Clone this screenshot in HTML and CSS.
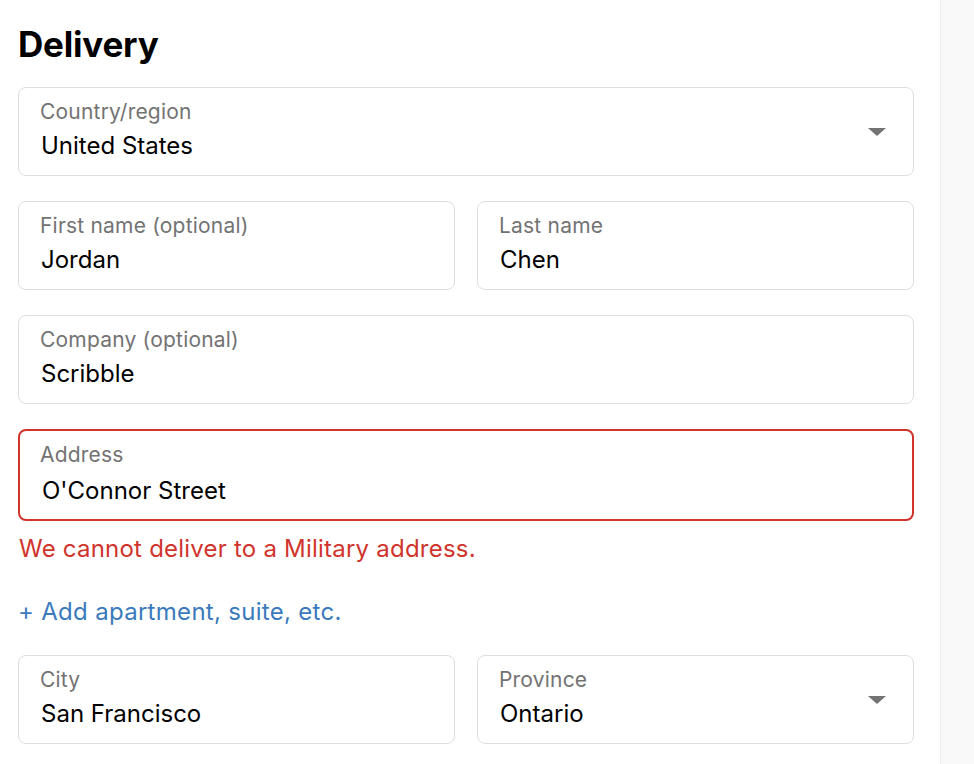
FILE: index.html
```html
<!DOCTYPE html>
<html lang="en">
<head>
<meta charset="utf-8">
<title>Delivery</title>
<link rel="stylesheet" href="styles.css">
</head>
<body>
<div class="page">
  <main class="main">
    <h1 class="title">Delivery</h1>
    <div class="form">
      <div class="field select">
        <div class="field-text">
          <span class="label">Country/region</span>
          <span class="value">United States</span>
        </div>
        <span class="caret"></span>
      </div>
      <div class="row">
        <div class="field">
          <div class="field-text">
            <span class="label">First name (optional)</span>
            <span class="value">Jordan</span>
          </div>
        </div>
        <div class="field">
          <div class="field-text">
            <span class="label">Last name</span>
            <span class="value">Chen</span>
          </div>
        </div>
      </div>
      <div class="field">
        <div class="field-text">
          <span class="label">Company (optional)</span>
          <span class="value">Scribble</span>
        </div>
      </div>
      <div class="group">
        <div class="field error">
          <div class="field-text">
            <span class="label">Address</span>
            <span class="value">O'Connor Street</span>
          </div>
        </div>
        <p class="error-msg">We cannot deliver to a Military address.</p>
      </div>
      <a class="add-link" href="#">+ Add apartment, suite, etc.</a>
      <div class="row">
        <div class="field">
          <div class="field-text">
            <span class="label">City</span>
            <span class="value">San Francisco</span>
          </div>
        </div>
        <div class="field select">
          <div class="field-text">
            <span class="label">Province</span>
            <span class="value">Ontario</span>
          </div>
          <span class="caret"></span>
        </div>
      </div>
    </div>
  </main>
  <aside class="sidebar"></aside>
</div>
</body>
</html>
```
FILE: styles.css
```css
* { box-sizing: border-box; }
html, body { margin: 0; padding: 0; background: #fff; }
body {
  font-family: Inter, "Liberation Sans", Arial, sans-serif;
  color: #000;
}
.page {
  display: flex;
  min-height: 764px;
}
.main {
  width: 940px;
  padding: 22px 26px 0 18px;
}
.sidebar {
  flex: 1;
  background: #f9f9f9;
  border-left: 1px solid #ececec;
}
.title {
  margin: 0;
  font-size: 35px;
  line-height: 44px;
  font-weight: 700;
  letter-spacing: -0.2px;
}
.form {
  margin-top: 21px;
  display: flex;
  flex-direction: column;
  gap: 25px;
}
.row {
  display: flex;
  gap: 22px;
}
.row .field { flex: 1; }
.field {
  height: 89px;
  border: 1px solid #dedede;
  border-radius: 8px;
  padding: 12px 21px 0 21px;
  display: flex;
  align-items: center;
  justify-content: space-between;
}
.field-text {
  display: flex;
  flex-direction: column;
  align-self: flex-start;
}
.label {
  font-size: 21px;
  line-height: 24px;
  color: #737373;
  letter-spacing: 0.2px;
}
.value {
  font-size: 24px;
  line-height: 32px;
  margin-top: 6px;
  padding-left: 1px;
}
.caret {
  width: 0;
  height: 0;
  border-left: 9px solid transparent;
  border-right: 9px solid transparent;
  border-top: 8px solid #737373;
  margin-right: 6px;
  margin-top: -12px;
}
.group {
  display: flex;
  flex-direction: column;
}
.field.error {
  border: 2px solid #d0342c;
  height: 92px;
  padding: 12px 20px 0 20px;
}
.field.error .value {
  margin-top: 8px;
  padding-left: 2px;
}
.error-msg {
  margin: 12px 0 0 1px;
  font-size: 24px;
  line-height: 32px;
  color: #d0342c;
  letter-spacing: 0.22px;
}
.add-link {
  font-size: 24px;
  line-height: 32px;
  color: #3a7abd;
  text-decoration: none;
  align-self: flex-start;
  margin-top: 6px;
  margin-bottom: 2px;
  letter-spacing: 0.3px;
}
```
